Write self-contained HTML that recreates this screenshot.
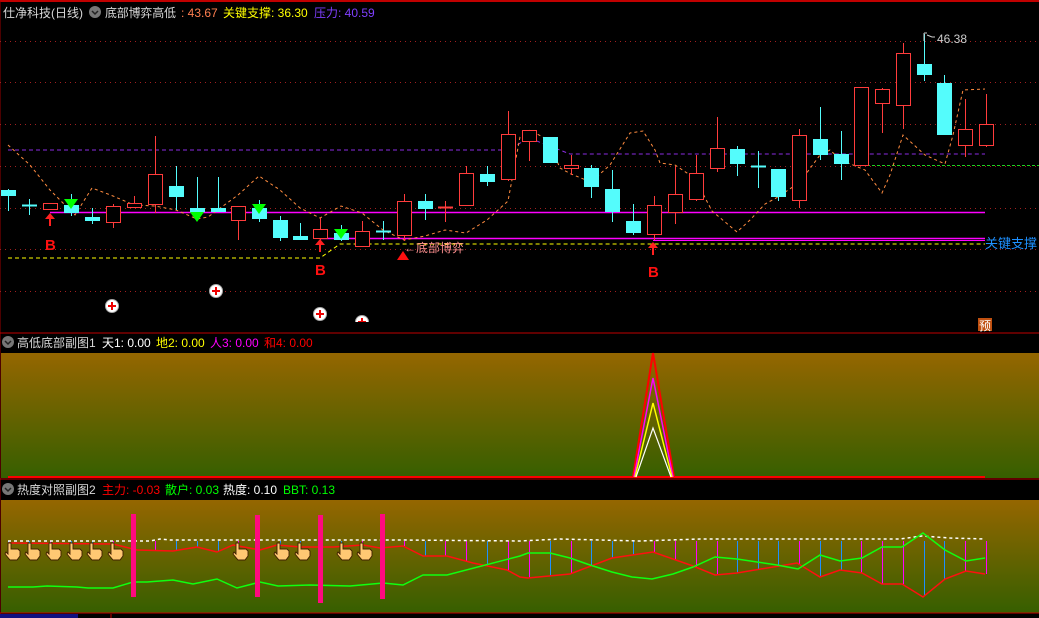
<!DOCTYPE html>
<html><head><meta charset="utf-8"><style>
html,body{margin:0;padding:0;background:#000;width:1039px;height:618px;overflow:hidden}
svg{display:block}
text{font-family:"Liberation Sans","Noto Sans CJK SC",sans-serif}
</style></head><body>
<svg id="s" width="1039" height="618" xmlns="http://www.w3.org/2000/svg">
<defs>
<linearGradient id="g" x1="0" y1="0" x2="0" y2="1"><stop offset="0" stop-color="#956600"/><stop offset="1" stop-color="#365f00"/></linearGradient>
</defs>
<rect width="1039" height="618" fill="#000"/>
<line x1="0" y1="1" x2="1039" y2="1" stroke="#c00000" stroke-width="2"/>
<line x1="0" y1="1" x2="0" y2="618" stroke="#900" stroke-width="1"/>
<g id="grid" stroke="#a02020" stroke-dasharray="1,4" stroke-width="1"></g>
<g id="main"></g>
<!-- header -->
<text x="3" y="17" font-size="12" fill="#d8d8d8" textLength="80">仕净科技(日线)</text>
<circle cx="95" cy="12" r="6" fill="#777"/><path d="M92 11l3 3 3-3" stroke="#222" stroke-width="1.5" fill="none"/>
<text x="105" y="17" font-size="12" fill="#d8d8d8" textLength="71">底部博弈高低</text>
<text x="181" y="17" font-size="12" fill="#ff7f50">: 43.67</text>
<text x="223" y="17" font-size="12" fill="#ffff00">关键支撑: 36.30</text>
<text x="314" y="17" font-size="12" fill="#7f3fff">压力: 40.59</text>
<!-- panel2 -->
<line x1="0" y1="333" x2="1039" y2="333" stroke="#c00000"/>
<rect x="1" y="353" width="1038" height="125" fill="url(#g)"/>
<line x1="0" y1="479" x2="1039" y2="479" stroke="#c00000"/>
<line x1="8" y1="477" x2="985" y2="477" stroke="#ff0000" stroke-width="2"/>
<circle cx="8" cy="342" r="6" fill="#777"/><path d="M5 341l3 3 3-3" stroke="#222" stroke-width="1.5" fill="none"/>
<text x="17" y="347" font-size="12" fill="#d8d8d8">高低底部副图1</text>
<text x="102" y="347" font-size="12" fill="#fff">天1: 0.00</text>
<text x="156" y="347" font-size="12" fill="#ffff00">地2: 0.00</text>
<text x="210" y="347" font-size="12" fill="#ff00ff">人3: 0.00</text>
<text x="264" y="347" font-size="12" fill="#ff0000">和4: 0.00</text>
<polyline points="633,477 653,353 674,477" fill="none" stroke="#ff0000" stroke-width="2"/>
<polyline points="634,477 653,378 673,477" fill="none" stroke="#ff00ff" stroke-width="1.5"/>
<polyline points="635,477 653,403 672,477" fill="none" stroke="#ffff00" stroke-width="1.5"/>
<polyline points="636,477 653,428 671,477" fill="none" stroke="#ffffff" stroke-width="1.2"/>
<!-- panel3 -->
<rect x="1" y="500" width="1038" height="113" fill="url(#g)"/>
<circle cx="8" cy="489" r="6" fill="#777"/><path d="M5 488l3 3 3-3" stroke="#222" stroke-width="1.5" fill="none"/>
<text x="17" y="494" font-size="12" fill="#d8d8d8">热度对照副图2</text>
<text x="102" y="494" font-size="12" fill="#ff0000">主力: -0.03</text>
<text x="165" y="494" font-size="12" fill="#00ff00">散户: 0.03</text>
<text x="223" y="494" font-size="12" fill="#fff">热度: 0.10</text>
<text x="283" y="494" font-size="12" fill="#00ff00">BBT: 0.13</text>
<g id="p3"></g>
<line x1="0" y1="613" x2="1039" y2="613" stroke="#c00000"/>
<rect x="0" y="614" width="78" height="4" fill="#101080"/>
<line x1="111" y1="614" x2="111" y2="618" stroke="#c00000"/>
</svg>
<script>
var NS="http://www.w3.org/2000/svg";
function el(p,t,a){var e=document.createElementNS(NS,t);for(var k in a)e.setAttribute(k,a[k]);p.appendChild(e);return e;}
var grid=document.getElementById('grid');
[41,82,124,166,208,249,291].forEach(function(y){el(grid,'line',{x1:0,y1:y+0.5,x2:1039,y2:y+0.5});});
var m=document.getElementById('main');
var C=[[8,190,196,189,211,'c'],[29,205,207,199,215,'c'],[50,203,209,203,209,'r'],[71,205,213,194,216,'c'],[92,217,221,208,224,'c'],[113,206,222,204,228,'r'],[134,203,207,196,208,'r'],[155,174,204,136,213,'r'],[176,186,197,166,210,'c'],[197,208,212,177,216,'c'],[218,208,212,177,212,'c'],[238,206,220,206,240,'r'],[259,208,219,200,222,'c'],[280,220,238,216,241,'c'],[300,236,240,223,240,'c'],[320,229,238,218,240,'r'],[341,233,240,225,241,'c'],[362,231,246,221,246,'r'],[383,231,232,221,240,'c'],[404,201,235,194,241,'r'],[425,201,209,194,220,'c'],[445,207,209,201,222,'r'],[466,173,205,166,205,'r'],[487,174,182,166,186,'c'],[508,134,179,111,181,'r'],[529,130,141,130,161,'r'],[550,137,163,137,163,'c'],[571,165,168,155,175,'r'],[591,168,187,165,198,'c'],[612,189,212,170,222,'c'],[633,221,233,204,235,'c'],[654,205,234,196,240,'r'],[675,194,212,166,224,'r'],[696,173,199,155,201,'r'],[717,148,168,117,172,'r'],[737,149,164,146,176,'c'],[758,166,168,151,188,'c'],[778,169,197,169,201,'c'],[799,135,200,129,208,'r'],[820,139,155,107,160,'c'],[841,154,164,131,180,'c'],[861,87,165,87,165,'r'],[882,89,103,88,133,'r'],[903,53,105,43,129,'r'],[924,64,75,34,81,'c'],[944,83,135,75,135,'c'],[965,129,145,99,157,'r'],[986,124,145,94,147,'r']];
el(m,'polyline',{points:"8,150 508,150 529,138 570,154 985,154",fill:'none',stroke:'#8a2be2','stroke-dasharray':'4,3'});
el(m,'line',{x1:862,y1:165.5,x2:1039,y2:165.5,stroke:'#20d020','stroke-dasharray':'3,2'});
el(m,'polyline',{points:"8,258 320,258 340,244 985,244",fill:'none',stroke:'#ffff00','stroke-dasharray':'4,3'});
el(m,'line',{x1:50,y1:212.5,x2:985,y2:212.5,stroke:'#ff00ff','stroke-width':1.5});
el(m,'line',{x1:320,y1:238.5,x2:985,y2:238.5,stroke:'#ff00ff','stroke-width':1.5});
el(m,'line',{x1:653,y1:240.5,x2:985,y2:240.5,stroke:'#ff00ff','stroke-width':1});
el(m,'polyline',{points:"8,145 30,165 50,190 65,205 75,215 92,188 113,196 134,205 155,206 176,210 197,219 208,217 238,195 259,176 280,190 300,208 320,218 341,206 362,213 383,230 404,240 425,236 445,230 466,233 487,220 508,201 520,137 530,130 548,140 560,168 571,174 591,182 610,165 630,133 643,131 655,150 660,163 675,165 687,173 700,188 712,211 737,232 750,220 765,204 778,197 800,182 820,155 830,150 841,160 865,170 882,193 890,175 903,135 925,155 945,164 953,135 963,90 985,89",fill:'none',stroke:'#ff8c40','stroke-dasharray':'3,3'});
C.forEach(function(c){var col=c[5]=='r'?'#ff3c3c':'#54fcfc';
el(m,'line',{x1:c[0]+0.5,y1:c[3],x2:c[0]+0.5,y2:c[4],stroke:col});
if(c[2]-c[1]<=2){el(m,'line',{x1:c[0]-7,y1:c[1]+0.5,x2:c[0]+8,y2:c[1]+0.5,stroke:col,'stroke-width':2});}
else if(c[5]=='r'){el(m,'rect',{x:c[0]-6.5,y:c[1]+0.5,width:14,height:c[2]-c[1],fill:'#000',stroke:col});}
else el(m,'rect',{x:c[0]-7,y:c[1],width:15,height:c[2]-c[1],fill:col});
});
[[71,199],[197,212],[259,204],[341,229]].forEach(function(t){el(m,'polygon',{points:(t[0]-7)+','+t[1]+' '+(t[0]+7)+','+t[1]+' '+t[0]+','+(t[1]+10),fill:'#00ff00'});});
[[50,213],[320,239],[653,242]].forEach(function(a){el(m,'polygon',{points:a[0]+','+a[1]+' '+(a[0]-5)+','+(a[1]+6)+' '+(a[0]+5)+','+(a[1]+6),fill:'#ff2020'});el(m,'line',{x1:a[0],y1:a[1]+5,x2:a[0],y2:a[1]+13,stroke:'#ff2020','stroke-width':2});});
[[50,250],[320,275],[653,277]].forEach(function(b){var t=el(m,'text',{x:b[0]-5,y:b[1],'font-size':15,fill:'#ff1010','font-weight':'bold'});t.textContent='B';});
el(m,'polygon',{points:"403,251 397,260 409,260",fill:'#ff1010'});
var t=el(m,'text',{x:404,y:252,'font-size':12,fill:'#ff9090'});t.textContent='←底部博弈';
[[112,306],[216,291],[320,314],[362,322]].forEach(function(p){el(m,'circle',{cx:p[0],cy:p[1],r:6.5,fill:'#fff',stroke:'#aaa'});el(m,'path',{d:'M'+(p[0]-4)+' '+p[1]+'h8M'+p[0]+' '+(p[1]-4)+'v8',stroke:'#e00',"stroke-width":2});});
el(m,'rect',{x:0,y:322,width:1039,height:11,fill:'#000'});
el(m,'line',{x1:0,y1:322,x2:0,y2:333,stroke:'#900'});
el(m,'path',{d:'M924 33v8M924 33h3M927 35l5 2h3',stroke:'#ccc',fill:'none'});
t=el(m,'text',{x:937,y:43,'font-size':12,fill:'#cccccc'});t.textContent='46.38';
t=el(m,'text',{x:985,y:248,'font-size':13,fill:'#1e90ff'});t.textContent='关键支撑';
el(m,'rect',{x:978,y:318,width:14,height:13,fill:'#c05010'});
t=el(m,'text',{x:979,y:330,'font-size':12,fill:'#fff'});t.textContent='预';
var p=document.getElementById('p3');
var red="8,543 113,544 137,550 173,551 197,547 217,552 233,545 260,550 277,545 300,547 333,547 363,545 380,548 403,546 423,556 447,556 473,563 507,570 520,577 528,578 570,574 612,558 653,552 693,566 715,575 737,573 797,563 820,577 840,570 862,573 882,584 902,584 923,597 945,579 966,571 985,574";
var grn="8,587 33,587 47,586 77,587 88,588 113,588 133,582 147,582 173,580 193,584 217,579 237,588 260,582 278,586 310,585 350,586 383,583 403,585 423,575 447,575 520,556 528,553 550,553 570,558 590,565 612,572 632,577 652,579 673,574 693,567 715,557 737,559 777,565 798,569 820,555 840,561 862,558 882,547 902,547 923,533 945,550 966,561 985,558";
var rp=red.split(' ').map(function(s){return s.split(',').map(Number);});
function ry(x){for(var i=1;i<rp.length;i++){if(x<=rp[i][0]){var a=rp[i-1],b=rp[i];return a[1]+(b[1]-a[1])*(x-a[0])/(b[0]-a[0]);}}return 574;}
C.forEach(function(c,i){var y2=ry(c[0]);el(p,'line',{x1:c[0]+0.5,y1:541,x2:c[0]+0.5,y2:y2,stroke:c[5]=='r'?'#ff00ff':'#1e90ff','stroke-width':1});});
el(p,'polyline',{points:"8,541 150,541 160,539 170,540 400,540 520,541 560,539 640,541 700,539 760,539 900,539 922,536 950,538 985,539",fill:'none',stroke:'#fff','stroke-dasharray':'3,3','stroke-width':1.5});
el(p,'polyline',{points:red,fill:'none',stroke:'#ff1010','stroke-width':1.5});
el(p,'polyline',{points:grn,fill:'none',stroke:'#10ff10','stroke-width':1.5});
[[133,514,597],[257,515,597],[320,515,603],[382,514,599]].forEach(function(b){el(p,'rect',{x:b[0]-2,y:b[1],width:5,height:b[2]-b[1],fill:'#ff0a80'});});
[10,30,51,72,92,113,238,279,300,342,362].forEach(function(x){
el(p,'path',{d:'M'+(x-2)+' 543 h3 v6 h7 l2 2 v5 l-3 4 h-7 l-5 -6 l1 -2 l2 2 z',fill:'#ffc873',stroke:'#402000','stroke-width':0.9});});
</script>
</body></html>
